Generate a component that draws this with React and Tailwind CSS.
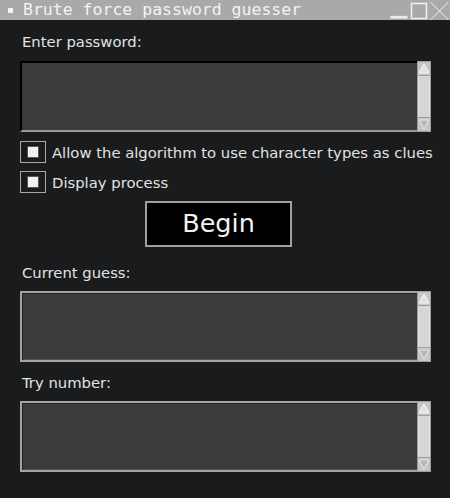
import React from 'react';

const ScrollBar = () => (
  <div className="w-[14px] shrink-0 flex flex-col bg-[#d2d2d2] border border-[#9c9c9c]">
    <div className="h-[14px] flex items-center justify-center bg-[#c6c6c6] border-b border-[#a0a0a0]">
      <svg width="12" height="11" viewBox="0 0 12 11">
        <path d="M6 1 L11 10 L1 10 Z" fill="#e0e0e0" stroke="#f8f8f8" strokeWidth="1" />
      </svg>
    </div>
    <div className="flex-1 bg-[#d6d6d6] border-x border-[#e4e4e4]" />
    <div className="h-[14px] flex items-center justify-center bg-[#c6c6c6] border-t border-[#a0a0a0]">
      <svg width="12" height="11" viewBox="0 0 12 11">
        <path d="M1 1 L11 1 L6 10 Z" fill="#b8b8b8" stroke="#e8e8e8" strokeWidth="1" />
      </svg>
    </div>
  </div>
);

const TextBox = ({ focused }) => (
  <div className="flex h-[71px] w-[411px]">
    <div
      className={
        focused
          ? 'flex-1 bg-[#3a3b3d] border-2 border-black border-b-[#9a9a9a] border-r-0'
          : 'flex-1 bg-[#3a3b3d] border-2 border-[#a4a4a4] border-r-0 shadow-[inset_1px_1px_0_#222,inset_0_-1px_0_#555]'
      }
    />
    <ScrollBar />
  </div>
);

const CheckRow = ({ label, className }) => (
  <div className={`flex items-center whitespace-nowrap ${className}`}>
    <div className="w-[26px] h-[22px] shrink-0 border border-[#a8a8a8] flex items-center justify-center">
      <div className="w-[12px] h-[12px] bg-[#f2f2f2] border border-[#555]" />
    </div>
    <span className="ml-[6px] text-[14.8px] leading-[17px] text-[#e2e2e2]">{label}</span>
  </div>
);

const App = () => {
  return (
    <div
      className="w-[450px] h-[498px] bg-[#1a1b1d] flex flex-col overflow-hidden"
      style={{ fontFamily: '"DejaVu Sans", sans-serif' }}
    >
      {/* title bar */}
      <div className="h-[20px] bg-[#a9a9a9] flex items-center shrink-0">
        <div className="ml-[8px] w-[5px] h-[5px] bg-[#f4f4f4]" />
        <span
          className="ml-[10px] text-[16.5px] leading-[20px] text-[#f4f4f4] whitespace-nowrap"
          style={{ fontFamily: '"DejaVu Sans Mono", monospace' }}
        >
          Brute force password guesser
        </span>
        <div className="ml-auto flex items-center h-[20px]">
          <svg width="60" height="20" viewBox="0 0 60 20">
            <rect x="0.5" y="16" width="17" height="2.5" fill="#f0f0f0" stroke="#cfcfcf" strokeWidth="0.5" />
            <rect x="21.5" y="3.5" width="15" height="15" fill="none" stroke="#f2f2f2" strokeWidth="1.5" />
            <path d="M40.5 2 L58.5 20 M58.5 2 L40.5 20" stroke="#f0f0f0" strokeWidth="1" />
          </svg>
        </div>
      </div>

      <div className="flex flex-col px-[20px]">
        <span className="mt-[13px] ml-[2px] text-[14.8px] leading-[17px] text-[#e2e2e2]">Enter password:</span>
        <div className="mt-[11px]">
          <TextBox focused />
        </div>

        <CheckRow className="mt-[9px]" label="Allow the algorithm to use character types as clues" />
        <CheckRow className="mt-[8px]" label="Display process" />

        <div className="mt-[8px] flex">
          <button className="ml-[125px] w-[147px] h-[46px] bg-black border-2 border-[#a0a0a0] text-[25.5px] leading-none text-[#f2f2f2]">
            Begin
          </button>
        </div>

        <span className="mt-[17px] ml-[2px] text-[14.8px] leading-[17px] text-[#e2e2e2]">Current guess:</span>
        <div className="mt-[10px]">
          <TextBox />
        </div>

        <span className="mt-[12px] ml-[2px] text-[14.8px] leading-[17px] text-[#e2e2e2]">Try number:</span>
        <div className="mt-[10px]">
          <TextBox />
        </div>
      </div>
    </div>
  );
};

export default App;
